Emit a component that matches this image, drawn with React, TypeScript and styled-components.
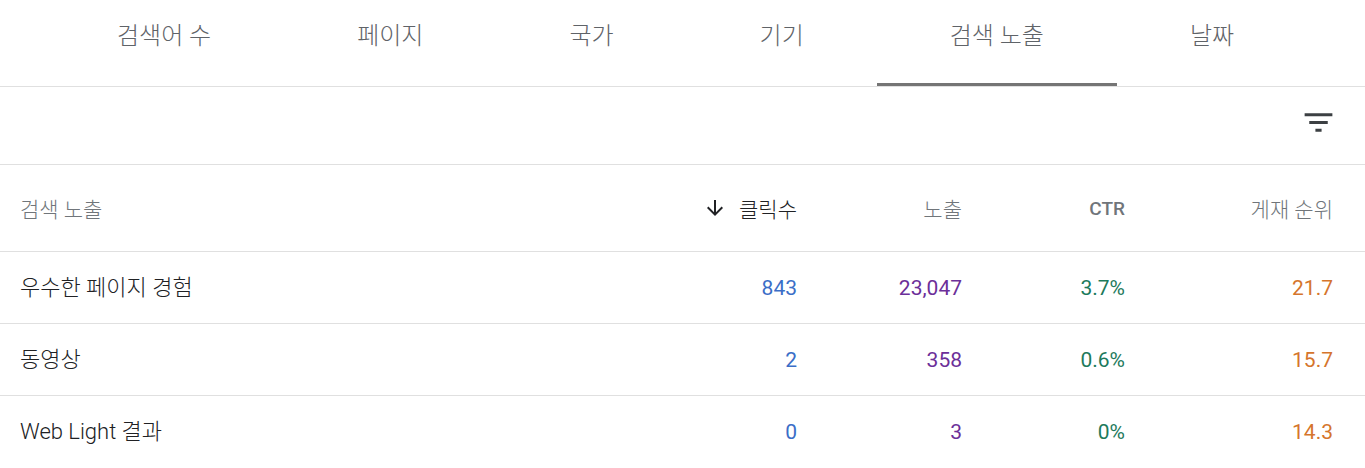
import React from 'react';
import styled, { createGlobalStyle } from 'styled-components';

const GlobalStyle = createGlobalStyle`
  html, body {
    margin: 0;
    padding: 0;
    background: #fff;
  }
  body {
    font-family: Roboto, "Noto Sans CJK KR", "Liberation Sans", sans-serif;
    color: #202124;
  }
`;

type Tab = { label: string; active?: boolean };

const tabs: Tab[] = [
  { label: '검색어 수' },
  { label: '페이지' },
  { label: '국가' },
  { label: '기기' },
  { label: '검색 노출', active: true },
  { label: '날짜' },
];

type Row = {
  label: string;
  clicks: string;
  impressions: string;
  ctr: string;
  position: string;
};

const rows: Row[] = [
  { label: '우수한 페이지 경험', clicks: '843', impressions: '23,047', ctr: '3.7%', position: '21.7' },
  { label: '동영상', clicks: '2', impressions: '358', ctr: '0.6%', position: '15.7' },
  { label: 'Web Light 결과', clicks: '0', impressions: '3', ctr: '0%', position: '14.3' },
];

const metricColors = {
  clicks: '#3b6ec7',
  impressions: '#6c2f99',
  ctr: '#1d7a5c',
  position: '#d5752c',
};

export default function App() {
  return (
    <>
      <GlobalStyle />
      <Wrapper>
        <TabBar>
          {tabs.map((t) => (
            <TabItem key={t.label} $active={t.active}>
              {t.label}
            </TabItem>
          ))}
        </TabBar>

        <Toolbar>
          <IconButton aria-label="필터">
            <svg width="37" height="37" viewBox="0 0 24 24" fill="#3c4043">
              <path d="M10 18h4v-2h-4v2zM3 6v2h18V6H3zm3 7h12v-2H6v2z" />
            </svg>
          </IconButton>
        </Toolbar>

        <Table>
          <HeadRow>
            <HeadCell>검색 노출</HeadCell>
            <HeadCell $right $sorted>
              <svg width="24" height="24" viewBox="0 0 24 24" fill="#202124">
                <path d="M20 12l-1.41-1.41L13 16.17V4h-2v12.17l-5.58-5.59L4 12l8 8 8-8z" />
              </svg>
              클릭수
            </HeadCell>
            <HeadCell $right>노출</HeadCell>
            <HeadCell $right $latin>CTR</HeadCell>
            <HeadCell $right>게재 순위</HeadCell>
          </HeadRow>
          {rows.map((r) => (
            <BodyRow key={r.label}>
              <LabelCell>{r.label}</LabelCell>
              <NumCell $color={metricColors.clicks}>{r.clicks}</NumCell>
              <NumCell $color={metricColors.impressions}>{r.impressions}</NumCell>
              <NumCell $color={metricColors.ctr}>{r.ctr}</NumCell>
              <NumCell $color={metricColors.position}>{r.position}</NumCell>
            </BodyRow>
          ))}
        </Table>
      </Wrapper>
    </>
  );
}

const Wrapper = styled.div`
  width: 1365px;
  height: 468px;
  overflow: hidden;
  background: #fff;
`;

const TabBar = styled.div`
  display: flex;
  height: 86px;
  padding-left: 44px;
  border-bottom: 1px solid #e0e0e0;
`;

const TabItem = styled.div<{ $active?: boolean }>`
  padding: 21px 73px 0;
  font-size: 24px;
  font-weight: 300;
  line-height: 30px;
  color: #5f6368;
  white-space: nowrap;
  box-sizing: border-box;
  border-bottom: 3px solid ${(p) => (p.$active ? '#757575' : 'transparent')};
`;

const Toolbar = styled.div`
  display: flex;
  justify-content: flex-end;
  align-items: flex-start;
  height: 78px;
  padding: 17px 28px 0 0;
  box-sizing: border-box;
  border-bottom: 1px solid #e0e0e0;
`;

const IconButton = styled.button`
  display: flex;
  padding: 0;
  border: none;
  background: none;
  cursor: pointer;
`;

const Table = styled.div`
  display: flex;
  flex-direction: column;
`;

const gridCols = `
  display: grid;
  grid-template-columns: 1fr 165px 165px 163px 208px;
  padding: 0 32px 0 20px;
  align-items: center;
  border-bottom: 1px solid #e0e0e0;
`;

const HeadRow = styled.div`
  ${gridCols}
  height: 86px;
`;

const BodyRow = styled.div`
  ${gridCols}
  height: 71px;

  &:last-child {
    border-bottom: none;
  }
`;

const HeadCell = styled.div<{ $right?: boolean; $sorted?: boolean; $latin?: boolean }>`
  display: flex;
  align-items: center;
  justify-content: ${(p) => (p.$right ? 'flex-end' : 'flex-start')};
  gap: 12px;
  font-size: ${(p) => (p.$latin ? '19px' : '21px')};
  font-weight: ${(p) => (p.$latin ? 500 : 300)};
  color: ${(p) => (p.$sorted ? '#202124' : '#70757a')};
`;

const LabelCell = styled.div`
  font-size: 22px;
  font-weight: 300;
  line-height: 26px;
  color: #202124;
`;

const NumCell = styled.div<{ $color: string }>`
  text-align: right;
  font-size: 21px;
  color: ${(p) => p.$color};
`;
